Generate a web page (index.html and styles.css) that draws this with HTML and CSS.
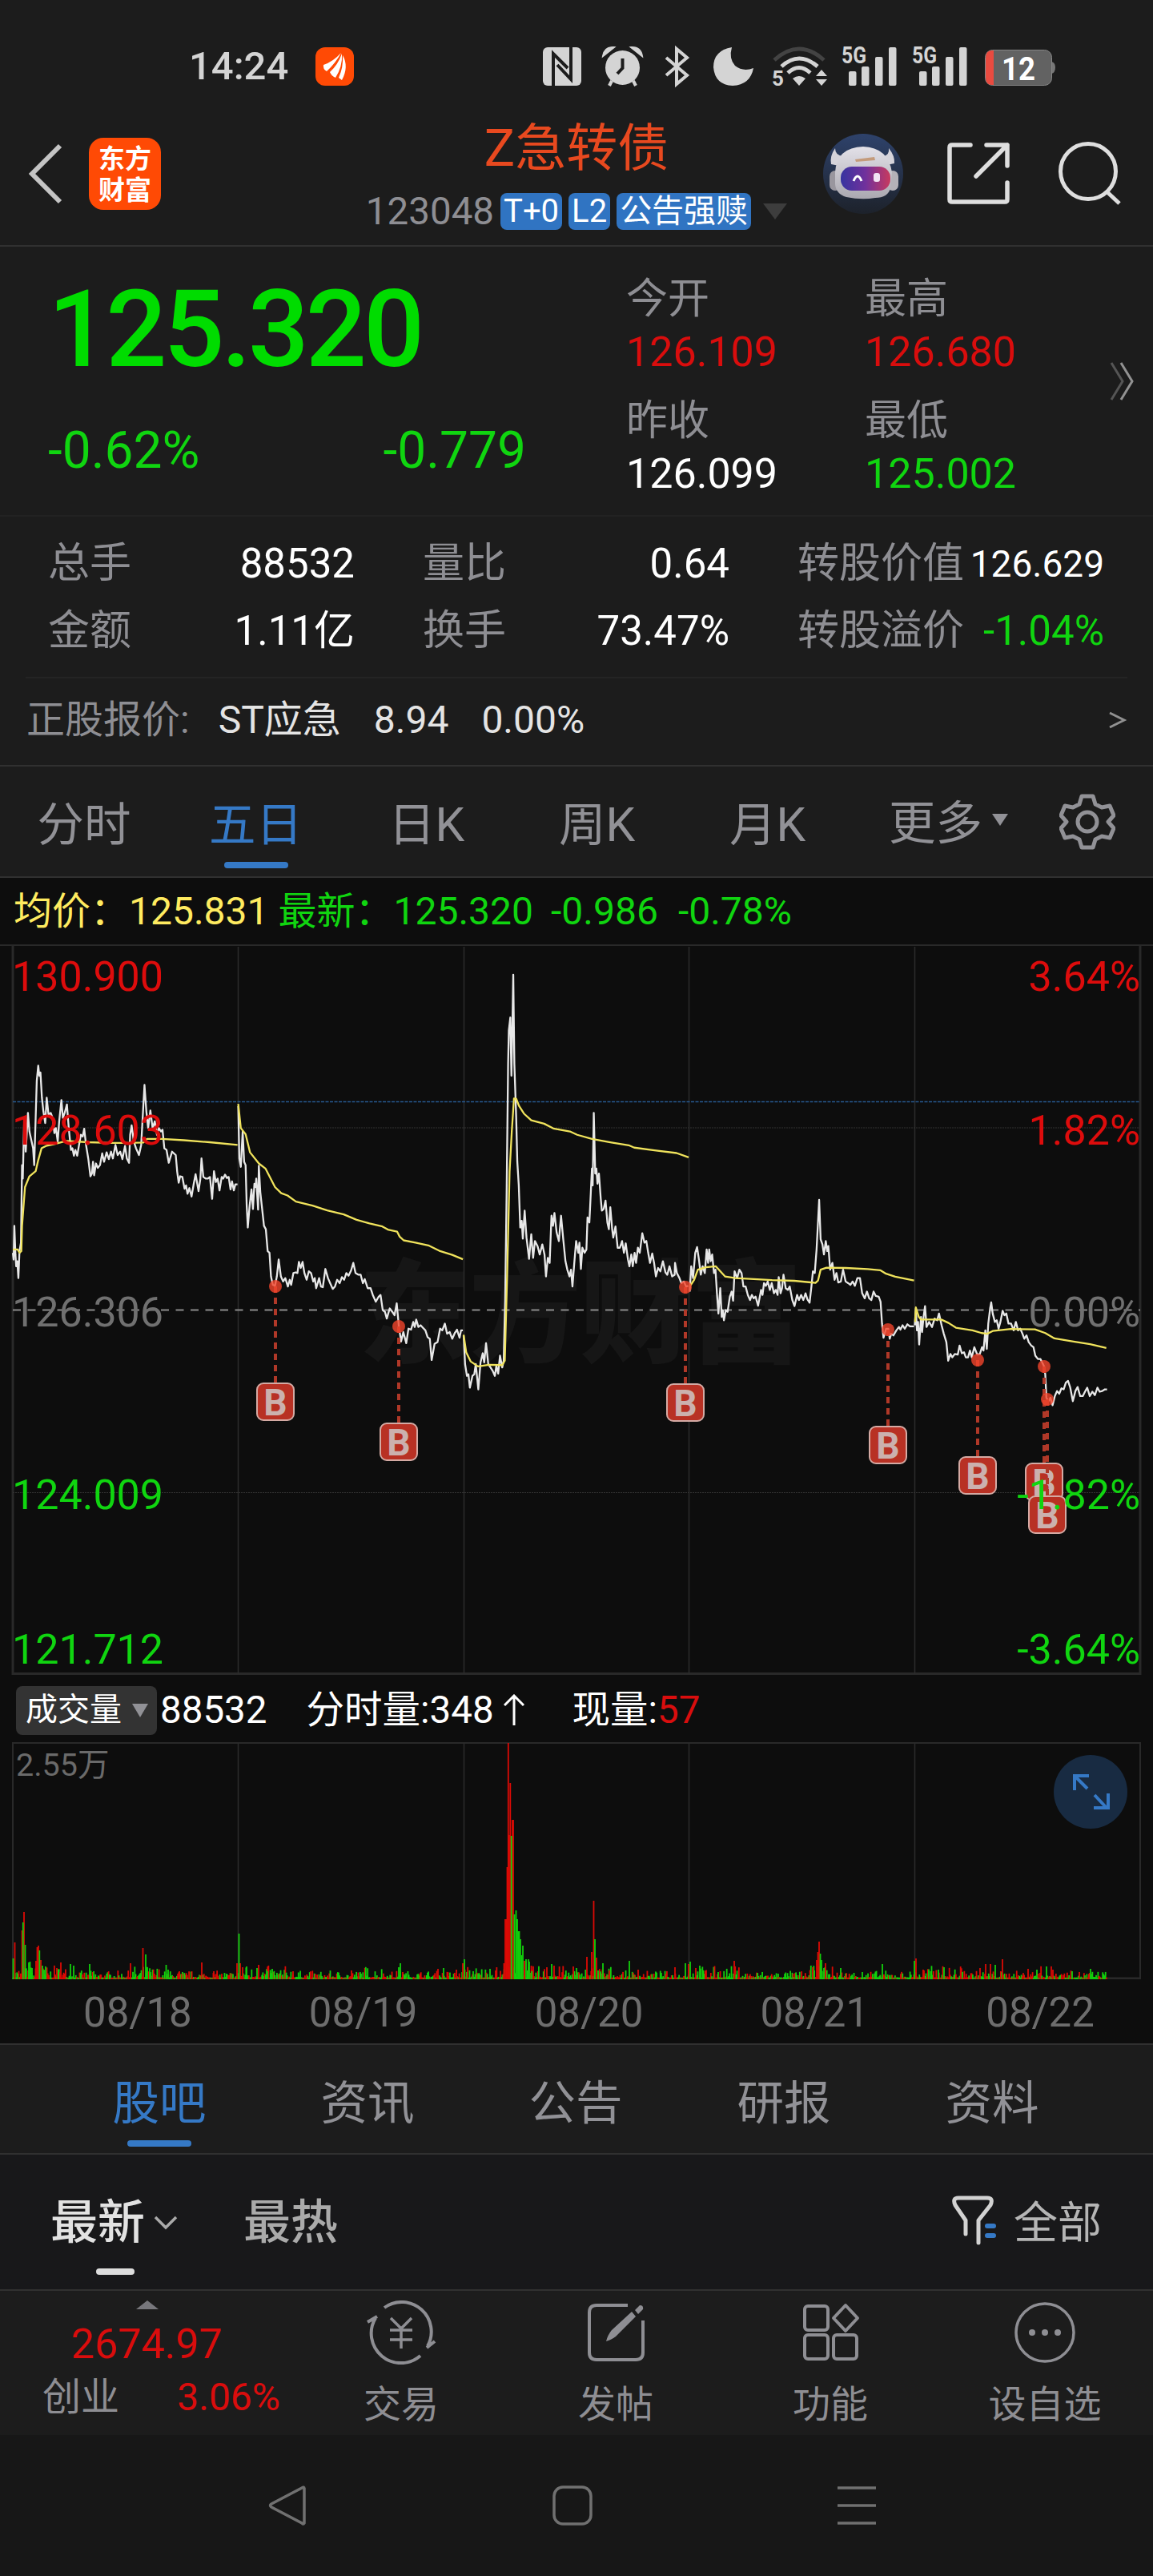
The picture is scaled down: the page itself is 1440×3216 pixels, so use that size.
FILE: index.html
```html
<!DOCTYPE html>
<html lang="zh-CN">
<head>
	<meta charset="utf-8">
	<title>Z急转债 123048</title>
	<link rel="stylesheet" href="styles.css">
</head>
<body>
	<!-- status bar -->
	<div class="status">
		<span class="clock">14:24</span>
		<svg class="appIcon" width="48" height="48" viewBox="0 0 48 48"><rect width="48" height="48" rx="12" fill="#ff4a05"/><path d="M10 22Q22 18 32 7Q25 20 14 30Q9 27 10 22ZM18 31Q28 22 33 8Q34 24 25 38Q20 36 18 31ZM29 38Q35 25 34 10Q42 24 33 41Z" fill="#fff"/></svg>
		<svg class="sysIcons" width="650" height="60" viewBox="672 52 650 60" fill="#d4d4d4">
			<!-- nfc -->
			<rect x="678" y="58" width="48" height="48" rx="6"/>
			<path d="M691 106V66L709 84M713 58V98L696 80" fill="none" stroke="#1c1c1c" stroke-width="4"/>
			<!-- alarm -->
			<ellipse cx="777.500" cy="83.500" rx="21.500" ry="21.500"/>
			<path d="M753 69Q755 57 767 58ZM802 69Q800 57 788 58Z" stroke="#d4d4d4" stroke-width="2"/>
			<path d="M764 100L761 106M791 100L794 106" stroke="#d4d4d4" stroke-width="4"/>
			<path d="M777.500 72V84L771 91" fill="none" stroke="#1c1c1c" stroke-width="4"/>
			<!-- bluetooth -->
			<path d="M832 71L858 93L845 104V60L858 71L832 93" fill="none" stroke="#d4d4d4" stroke-width="4"/>
			<!-- moon -->
			<path d="M914 58Q891 62 891 83Q893 105 915 106Q937 105 941 84Q928 89 918 81Q910 72 914 58Z"/>
			<!-- wifi -->
			<g fill="none" stroke-width="5">
				<path d="M967 74Q998 46 1029 74" stroke="#434343"/>
				<path d="M976 82Q998 62 1021 82M984 90Q998 77 1012 90" stroke="#d4d4d4"/>
			</g>
			<path d="M990 97Q998 91 1006 97L998 106ZM1019 94L1026 86L1033 94ZM1019 98L1026 106L1033 98Z"/>
			<text x="964" y="106" font-size="26" font-weight="700">5</text>
			<!-- signal -->
			<g id="signal">
				<text x="1051" y="78" font-size="29" font-weight="700" textLength="31" lengthAdjust="spacingAndGlyphs">5G</text>
				<rect x="1060" y="88" width="9.500" height="18" rx="2"/>
				<rect x="1076" y="82" width="9.500" height="24" rx="2"/>
				<rect x="1093" y="70" width="9.500" height="36" rx="2"/>
				<rect x="1110" y="58" width="9.500" height="48" rx="2"/>
			</g>
			<use href="#signal" x="88"/>
			<!-- battery -->
			<path d="M1313 76Q1318 77 1318 83Q1318 90 1313 91Z" fill="#777"/>
			<rect x="1230.500" y="61.500" width="83" height="44" rx="9" fill="#626262" stroke="#858585"/>
			<path d="M1241 62H1239Q1231 62 1231 71V96Q1231 105 1239 105H1241Z" fill="#e94b40"/>
			<text x="1272" y="98.500" font-size="41" font-weight="700" fill="#fff" text-anchor="middle" textLength="42" lengthAdjust="spacingAndGlyphs">12</text>
		</svg>
	</div>

	<!-- title -->
	<header class="header">
		<div class="headLeft">
			<svg width="44" height="76" viewBox="0 0 44 76"><path d="M40 3L5 38L40 73" fill="none" stroke="#c4c4c4" stroke-width="6"/></svg>
			<div class="brand">东方<br>财富</div>
		</div>
		<div class="headTitle">
			<h1>Z急转债</h1>
			<div class="sub">
				<span class="code">123048</span><b class="tag">T+0</b><b class="tag">L2</b><b class="tag">公告强赎</b>
				<svg width="30" height="20" viewBox="0 0 30 20"><path d="M0 0H30L15 20Z" fill="#3d3d3d"/></svg>
			</div>
		</div>
		<div class="headRight">
			<svg width="100" height="100" viewBox="0 0 100 100">
				<defs>
					<linearGradient id="sky" x1="0" y1="0" x2="0" y2="1"><stop offset="0" stop-color="#2e426b"/><stop offset="1" stop-color="#1d222b"/></linearGradient>
					<linearGradient id="visor"><stop offset="0" stop-color="#3733a0"/><stop offset=".5" stop-color="#71319c"/><stop offset="1" stop-color="#c83a5e"/></linearGradient>
					<linearGradient id="shell" x1="0" y1="0" x2="0" y2="1"><stop offset="0" stop-color="#e3e1e8"/><stop offset="1" stop-color="#aaa8b0"/></linearGradient>
				</defs>
				<circle cx="50" cy="50" r="50" fill="url(#sky)"/>
				<path d="M15 18Q8 28 10 38L20 40L25 28Q15 27 15 18ZM82 18Q90 28 89 37L79 39L75 28Q83 27 82 18Z" fill="#d5d3da"/>
				<rect x="8" y="46" width="14" height="25" rx="7" fill="#99969e"/><rect x="80" y="46" width="14" height="25" rx="7" fill="#b4b1b8"/>
				<path d="M15 48Q17 17 50 16Q81 17 86 48L84 68Q81 80 65 80Q48 83 29 79Q16 75 15 63Z" fill="url(#shell)"/>
				<path d="M40 32L64 29L65 33L41 35Z" fill="#c49b7b"/>
				<rect x="22" y="41" width="62" height="30" rx="14" fill="url(#visor)"/>
				<path d="M38 59Q43 47 48 59" fill="none" stroke="#fff" stroke-width="3"/><rect x="63" y="49" width="8" height="11" rx="3" fill="#f2e4f3"/>
			</svg>
			<svg width="78" height="78" viewBox="0 0 78 78" fill="none" stroke="#dedede" stroke-width="5.500" stroke-linecap="round" stroke-linejoin="round"><path d="M29 3H6Q3 3 3 6V71Q3 74 6 74H72Q75 74 75 71V50M49 3H75V29M75 3L36 42"/></svg>
			<svg width="80" height="80" viewBox="0 0 80 80" fill="none" stroke="#dedede" stroke-width="5"><circle cx="38" cy="37" r="34.500"/><path d="M61 62L77 77"/></svg>
		</div>
	</header>

	<!-- quote -->
	<section class="quote">
		<div class="last green">
			<div class="price">125.320</div>
			<div class="change"><span>-0.62%</span><span>-0.779</span></div>
		</div>
		<dl class="ohlc">
			<div><dt>今开</dt><dd class="red">126.109</dd></div>
			<div><dt>最高</dt><dd class="red">126.680</dd></div>
			<div><dt>昨收</dt><dd>126.099</dd></div>
			<div><dt>最低</dt><dd class="green">125.002</dd></div>
		</dl>
		<svg class="more" width="34" height="48" viewBox="0 0 34 48" fill="none" stroke-width="3"><path d="M3 1L17 24L3 47" stroke="#555"/><path d="M15 1L29 24L15 47" stroke="#929292"/></svg>
	</section>
	<section class="stats">
		<div><span>总手</span><b>88532</b></div>
		<div><span>量比</span><b>0.64</b></div>
		<div><span>转股价值</span><b class="small">126.629</b></div>
		<div><span>金额</span><b>1.11亿</b></div>
		<div><span>换手</span><b>73.47%</b></div>
		<div><span>转股溢价</span><b class="green">-1.04%</b></div>
	</section>
	<section class="stock">
		<span class="stockLabel">正股报价:</span><span>ST应急</span><span>8.94</span><span>0.00%</span>
		<svg width="24" height="22" viewBox="0 0 24 22"><path d="M2 2L20 11L2 20" fill="none" stroke="#909090" stroke-width="3"/></svg>
	</section>

	<!-- period tabs -->
	<nav class="tabs">
		<a>分时</a><a class="on">五日</a><a>日K</a><a>周K</a><a>月K</a>
		<a class="moreTab">更多<svg width="20" height="15" viewBox="0 0 20 15"><path d="M0 0H20L10 15Z" fill="#919196"/></svg></a>
		<svg class="gear" width="70" height="70" viewBox="0 0 70 70" fill="none" stroke="#919196" stroke-width="5" stroke-linejoin="round"><path d="M28 3H42L45 13L53 17L63 15L68 27L61 35L68 43L63 55L53 53L45 57L42 67H28L25 57L17 53L7 55L2 43L9 35L2 27L7 15L17 17L25 13Z"/><circle cx="35" cy="35" r="12"/></svg>
	</nav>

	<!-- five day chart -->
	<section class="chart">
		<div class="legend"><span class="yellow">均价：125.831</span><span class="green">最新：125.320</span><span class="green">-0.986</span><span class="green percent">-0.78%</span></div>
		<svg class="plot" width="1440" height="912" viewBox="0 1179 1440 912">
			<g font-size="140" font-weight="900" fill="#161616"><text x="448" y="1690" textLength="554">东方财富</text></g>
			<path d="M0 1180H1440" stroke="#333" stroke-width="1.500"/>
			<path d="M16 1180V2091M1424 1180V2091M16 2089.500H1424" stroke="#292929" stroke-width="3" fill="none"/>
			<path d="M297.500 1182V2090M579.500 1182V2090M860.500 1182V2090M1142.500 1182V2090" stroke="#2c2c2c" stroke-width="1.500"/>
			<path d="M16 1408H1424M16 1863.500H1424" stroke="#333" stroke-dasharray="2 1"/>
			<path d="M16 1375.500H1424" stroke="#27588f" stroke-width="1.500" stroke-dasharray="4 1.500"/>
			<path d="M16 1635.500H1424" stroke="#8b8b8b" stroke-width="1.800" stroke-dasharray="10 8.500"/>
			<g class="curves" transform="matrix(.45918 0 0 .42091 0 1160)">
				<g stroke="#e8e8e8">
					<polyline points="35,960 37,980 39,880 42,965 44,1000 47,985 50,1035 53,955 57,930 60,700 62,740 66,560 70,660 76,545 80,600 85,625 90,650 93,700 97,560 100,450 104,405 107,435 110,425 114,500 118,540 123,575 127,500 132,550 138,545 143,560 148,605 152,590 157,630 161,570 167,507 171,560 176,545 182,520 187,590 193,655 197,650 201,672 205,655 210,672 215,640 220,610 225,615 229,592 234,640 240,680 246,733 250,725 253,690 256,730 261,695 266,708 272,700 278,665 283,690 290,662 296,682 302,660 307,680 314,640 320,670 327,660 333,682 340,643 345,680 351,693 354,610 358,582 364,630 370,650 378,670 384,640 388,560 393,462 398,540 403,590 409,538 415,590 421,570 427,610 432,590 438,600 442,595 447,650 453,655 459,693 468,660 478,670 482,720 486,752 490,733 496,735 502,770 506,760 510,785 515,768 521,793 527,755 532,727 540,777 545,740 548,680 553,735 560,740 565,740 571,735 577,800 582,718 587,750 592,740 597,775 603,735 607,740 612,728 617,738 622,735 627,772 631,748 636,775 640,757 646,757"/>
					<polyline points="648,525 651,680 655,705 660,600 664,690 668,700 671,820 674,885 679,820 684,772 688,830 692,755 695,765 697,740 702,832 704,702 708,780 713,830 718,880 723,890 728,955 733,960 737,1030 742,1055 748,1058 753,1030 758,980 764,1030 770,1045 776,1035 783,1060 788,1040 792,1055 798,1020 804,1018 809,1020 813,987 818,1005 823,987 828,1020 834,1040 840,1015 846,1020 852,1045 856,1035 860,1065 868,1035 873,1060 878,1062 885,1008 892,1035 898,1050 905,1067 911,1060 917,1040 924,1050 930,1032 936,1040 942,1020 948,1028 955,1012 961,990 967,1020 975,1025 981,1025 987,1050 992,1038 1000,1065 1008,1065 1014,1085 1022,1105 1030,1090 1035,1085 1041,1130 1047,1135 1052,1155 1060,1125 1067,1135 1073,1145 1079,1110 1085,1180 1091,1223 1097,1195 1105,1228 1111,1185 1118,1188 1124,1165 1128,1180 1132,1158 1138,1180 1144,1175 1150,1182 1157,1190 1163,1210 1169,1215 1174,1278 1182,1230 1190,1225 1197,1185 1203,1190 1210,1170 1216,1200 1223,1195 1230,1215 1237,1198 1243,1188 1250,1212 1254,1190 1259,1190"/>
					<polyline points="1261,1205 1265,1290 1270,1325 1274,1320 1278,1360 1285,1325 1290,1320 1294,1290 1301,1365 1307,1285 1313,1258 1317,1285 1322,1228 1328,1290 1334,1300 1340,1310 1346,1325 1350,1295 1355,1318 1360,1265 1366,1300 1370,1280 1374,1100 1378,780 1382,400 1384,300 1388,262 1391,435 1394,265 1396,135 1399,400 1404,560 1407,690 1411,760 1415,885 1419,865 1422,918 1427,835 1432,915 1439,978 1445,905 1450,975 1455,925 1462,940 1468,965 1475,935 1481,965 1485,1030 1490,975 1495,990 1500,850 1504,880 1508,842 1514,900 1520,925 1526,850 1532,920 1538,985 1543,1010 1549,1030 1553,1010 1557,1060 1562,990 1567,925 1573,960 1576,930 1580,1008 1584,945 1590,960 1595,950 1598,855 1603,870 1607,780 1610,710 1612,760 1615,545 1619,725 1622,710 1625,755 1629,725 1634,800 1637,835 1642,830 1647,805 1652,870 1656,890 1660,825 1665,890 1668,915 1674,882 1680,945 1686,945 1692,925 1697,960 1702,932 1708,980 1712,1000 1717,965 1721,1000 1726,960 1730,990 1735,945 1740,960 1747,902 1753,930 1758,925 1763,960 1768,990 1774,962 1779,990 1784,1030 1790,1005 1796,1015 1803,985 1810,1018 1815,1025 1821,1000 1828,1030 1835,1025 1836,990 1841,1020 1848,1035 1853,1050 1860,1045 1866,1060 1872,1058"/>
					<polyline points="1876,1075 1880,1000 1885,1035 1891,960 1896,943 1901,980 1906,1025 1911,1000 1917,1020 1922,950 1926,990 1929,950 1933,985 1937,965 1942,1020 1946,1010 1950,1080 1954,1140 1959,1065 1963,1150 1966,1130 1969,1160 1974,1130 1979,1135 1985,1090 1990,1075 1994,1102 1998,1015 2005,1035 2011,1010 2017,1020 2022,1060 2028,1060 2034,1085 2040,1100 2045,1085 2050,1095 2055,1090 2062,1117 2070,1070 2074,1085 2078,1050 2083,1058 2088,1045 2094,1070 2099,1050 2105,1080 2110,1070 2115,1085 2118,1032 2123,1080 2127,1065 2131,1025 2137,1065 2143,1070 2148,1060 2155,1100 2161,1118 2168,1085 2173,1100 2179,1085 2185,1100 2191,1080 2196,1098 2202,1108 2207,1060 2211,1015 2216,1020 2221,950 2228,803 2232,920 2237,935 2241,965 2246,925 2250,955 2253,940 2258,1010 2264,990 2270,1040 2275,1020 2280,1048 2287,1045 2293,1010 2300,1045 2307,1050 2313,1055 2319,1045 2325,1058 2332,1035 2339,1035 2345,1080 2352,1095 2358,1075 2364,1095 2370,1100 2376,1075 2382,1088 2390,1090 2395,1105 2399,1170 2403,1212 2410,1185 2416,1185 2420,1215 2424,1200 2430,1205 2438,1190 2445,1180 2449,1188 2455,1175 2461,1185 2468,1172 2475,1178 2486,1178"/>
					<polyline points="2488,1175 2491,1125 2494,1190 2497,1165 2500,1232 2505,1150 2508,1195 2512,1150 2516,1118 2520,1180 2527,1165 2535,1180 2542,1155 2549,1160 2554,1140 2561,1175 2567,1200 2574,1225 2579,1280 2585,1260 2590,1270 2597,1260 2605,1262 2610,1235 2616,1258 2622,1255 2627,1270 2633,1270 2638,1250 2643,1270 2650,1240 2658,1262 2665,1260 2671,1240 2675,1250 2680,1190 2684,1245 2688,1170 2693,1125 2696,1107 2700,1140 2706,1165 2711,1160 2716,1185 2721,1165 2727,1132 2732,1145 2737,1140 2743,1170 2750,1170 2757,1190 2763,1165 2769,1190 2775,1185 2781,1200 2786,1215 2792,1205 2798,1225 2805,1235 2811,1240 2816,1265 2823,1275 2830,1275 2839,1295 2843,1320 2846,1390 2852,1400 2857,1390 2863,1412 2869,1385 2875,1370 2881,1378 2887,1362 2893,1365 2899,1345 2905,1340 2911,1360 2918,1400 2925,1370 2931,1358 2938,1385 2945,1385 2951,1372 2957,1360 2964,1385 2971,1372 2978,1382 2985,1360 2991,1372 2998,1370 3005,1365 3011,1365"/>
				</g>
				<!-- average price -->
				<g stroke="#f0e35c">
					<polyline points="35,950 48,950 53,960 58,955 60,880 68,765 80,733 97,718 104,685 113,650 125,643 150,637 180,628 240,632 300,634 350,634 390,633 400,622 440,622 500,626 570,632 646,640"/>
					<polyline points="648,518 655,590 668,608 680,662 704,695 722,710 748,765 765,783 782,790 805,808 850,820 890,834 935,846 970,862 1005,873 1040,882 1055,891 1080,897 1087,912 1098,923 1130,930 1165,938 1195,954 1230,966 1259,979"/>
					<polyline points="1261,1203 1268,1255 1280,1282 1300,1297 1330,1292 1366,1293 1373,1280 1380,1000 1386,720 1392,600 1398,502 1404,503 1412,525 1425,547 1445,567 1480,577 1505,591 1550,600 1570,610 1610,622 1660,632 1710,641 1725,648 1780,656 1840,664 1873,677"/>
					<polyline points="1876,1060 1888,1040 1898,1010 1920,1003 1947,1000 1957,1012 1972,1030 2000,1035 2100,1041 2160,1043 2218,1049 2225,1042 2232,1010 2248,1004 2300,1005 2360,1008 2395,1012 2410,1022 2435,1031 2486,1042"/>
					<polyline points="2489,1165 2491,1122 2499,1150 2505,1158 2560,1158 2580,1168 2600,1182 2645,1190 2670,1198 2685,1200 2700,1192 2750,1186 2815,1187 2843,1198 2868,1214 2920,1223 2965,1231 3009,1242"/>
				</g>
			</g>
			<g id="marks"></g>
			<g class="axis">
				<text x="15" y="1237" class="fillRed">130.900</text><text x="15" y="1429" class="fillRed">128.603</text>
				<text x="15" y="1656" class="fillGray">126.306</text>
				<text x="15" y="1884" class="fillGreen">124.009</text><text x="15" y="2077" class="fillGreen">121.712</text>
				<g text-anchor="end">
					<text x="1424" y="1237" class="fillRed">3.64%</text><text x="1424" y="1429" class="fillRed">1.82%</text>
					<text x="1424" y="1656" class="fillGray">0.00%</text>
					<text x="1424" y="1884" class="fillGreen">-1.82%</text><text x="1424" y="2077" class="fillGreen">-3.64%</text>
				</g>
			</g>
		</svg>

		<!-- volume -->
		<div class="volInfo">
			<span class="volBtn">成交量<svg width="20" height="17" viewBox="0 0 20 17"><path d="M0 0H20L10 17Z" fill="#919196"/></svg></span>
			<span>88532</span><span class="minute">分时量:348<svg width="26" height="40" viewBox="0 0 26 40"><path d="M13 39V3M1 14L13 2L25 14" fill="none" stroke="#fff" stroke-width="3"/></svg></span><span class="now">现量:<i class="red">57</i></span>
		</div>
		<div class="volume">
			<svg class="plot" width="1440" height="296" viewBox="0 2175 1440 296">
				<path d="M16 2471V2176H1424V2471" fill="none" stroke="#292929" stroke-width="2"/>
				<path d="M16 2470H1424" stroke="#292929" stroke-width="3"/>
				<path d="M297.500 2176V2470M579.500 2176V2470M860.500 2176V2470M1142.500 2176V2470" stroke="#2c2c2c" stroke-width="1.500"/>
				<g id="bars"></g>
				<text x="20" y="2217" font-size="39.500" fill="#6a6a6a">2.55万</text>
			</svg>
			<svg class="expand" width="92" height="92" viewBox="0 0 92 92" fill="none" stroke="#3579c6" stroke-width="4"><circle cx="46" cy="46" r="46" fill="#182b42" stroke="none"/><path d="M26 44V26H44M26 26L42 42M68 48V66H50M66 66L51 50"/></svg>
		</div>
		<div class="dates"><span>08/18</span><span>08/19</span><span>08/20</span><span>08/21</span><span>08/22</span></div>
	</section>

	<!-- forum -->
	<nav class="subTabs"><a class="on">股吧</a><a>资讯</a><a>公告</a><a>研报</a><a>资料</a></nav>
	<div class="filter">
		<span class="newest">最新</span><svg width="30" height="20" viewBox="0 0 30 20"><path d="M2 3L15 16L28 3" fill="none" stroke="#aaa" stroke-width="3.500"/></svg>
		<span class="hottest">最热</span>
		<svg class="funnel" width="58" height="64" viewBox="0 0 58 64" fill="none" stroke="#d2d2d2" stroke-width="5" stroke-linecap="round" stroke-linejoin="round"><path d="M18 48V31L5 12Q1 3 9 3H45Q53 3 49 12L34 31V59"/><path d="M45 38H53M45 50H53" stroke="#3579c6" stroke-width="6"/></svg>
		<span class="all">全部</span>
	</div>

	<!-- bottom bar -->
	<nav class="bottom">
		<div class="index">
			<svg width="28" height="11" viewBox="0 0 28 11"><path d="M0 11L14 0L28 11Z" fill="#77777c"/></svg>
			<div class="indexValue red">2674.97</div>
			<div class="indexRow"><span>创业</span><span class="red">3.06%</span></div>
		</div>
		<a><svg width="90" height="80" viewBox="-45 -40 90 80" fill="none" stroke="#8e8e93" stroke-width="4"><path d="M-21 -31A37 37 0 0 1 33 17M32 19L42 11M24 29A37 37 0 0 1 -32 -18M-30 -20L-42 -13"/><path d="M-13 -18L0 -5L13 -18M0 -5V20M-14 -3H14M-14 9H14" stroke-width="3.500"/></svg>交易</a>
		<a><svg width="90" height="80" viewBox="-45 -40 90 80" fill="none" stroke="#8e8e93" stroke-width="4"><path d="M15 -34H-24Q-33 -34 -33 -25V25Q-33 34 -24 34H25Q34 34 34 25V-15"/><path d="M-12 11Q-10 3 -5 -3L20 -26L25 -20L0 5Q-5 9 -12 11ZM24 -28L30 -34Q35 -34 34 -29L28 -23Z" fill="#8e8e93" stroke="none"/></svg>发帖</a>
		<a><svg width="90" height="80" viewBox="-45 -40 90 80" fill="none" stroke="#8e8e93" stroke-width="4"><rect x="-32" y="-33" width="29" height="30" rx="4"/><rect x="-32" y="3" width="29" height="30" rx="4"/><rect x="4" y="3" width="29" height="30" rx="4"/><path d="M19 -34L34 -18L19 -2L4 -18Z" stroke-linejoin="round"/></svg>功能</a>
		<a><svg width="90" height="80" viewBox="-45 -40 90 80" fill="none" stroke="#8e8e93" stroke-width="3.500"><circle r="36"/><g fill="#8e8e93" stroke="none"><circle cx="-16" r="4"/><circle r="4"/><circle cx="16" r="4"/></g></svg>设自选</a>
	</nav>
	<div class="sysNav">
		<svg width="50" height="50" viewBox="0 0 50 50"><path d="M45 3V47Q44 49 42 47L4 27Q1 25 4 23L42 3Q45 1 45 4Z"/></svg>
		<svg width="50" height="50" viewBox="0 0 50 50"><rect x="2" y="2" width="46" height="46" rx="11"/></svg>
		<svg width="50" height="50" viewBox="0 0 50 50"><path d="M1 3H49M1 25H49M1 47H49"/></svg>
	</div>
	<script src="chart.js"></script>
</body>
</html>
```
FILE: styles.css
```css
*{
	box-sizing:border-box;
}
body{
	margin:0;
	width:1440px;
	background:#1c1c1c;
	color:#fff;
	font-family:Roboto,"Noto Sans CJK SC",sans-serif;
	font-size:52px;
	line-height:1.2;
}
svg{
	display:block;
	flex:none;
}
b,i,h1{
	font-weight:400;
	font-style:normal;
}
.red{
	color:#d90d0d;
}
.green{
	color:#10d510;
}
.yellow{
	color:#ffeb60;
}

/* status bar */
.status{
	height:140px;
	padding:30px 118px 4px 236px;
	display:flex;
	align-items:center;
	color:#d4d4d4;
}
.clock{
	width:158px;
	font-size:49px;
	font-weight:500;
	line-height:60px;
}
.sysIcons{
	margin-left:auto;
}

/* title */
.header{
	height:168px;
	padding-bottom:12px;
	border-bottom:2px solid #303030;
	display:grid;
	grid-template-columns:440px 560px 440px;
	align-items:center;
}
.headLeft{
	display:flex;
	align-items:center;
	padding-left:35px;
	gap:32px;
}
.brand{
	width:90px;
	height:90px;
	border-radius:18px;
	background:#ff4a05;
	font-size:33px;
	font-weight:700;
	line-height:39px;
	padding-top:7px;
	text-align:center;
}
.headTitle{
	align-self:start;
	padding-top:14px;
}
.headTitle h1{
	margin:0 0 23px;
	font-size:64px;
	line-height:64px;
	text-align:center;
	color:#e8491f;
}
.sub{
	display:flex;
	justify-content:center;
	align-items:center;
	gap:8px;
	line-height:46px;
}
.code{
	font-size:47.500px;
	color:#8e8e93;
}
.tag{
	height:46px;
	padding:0 4px;
	border-radius:8px;
	background:#3074c2;
	font-size:40px;
}
.sub svg{
	margin-left:7px;
}
.headRight{
	display:flex;
	align-items:center;
	padding-left:28px;
}
.headRight svg + svg{
	margin-left:55px;
}
.headRight svg + svg + svg{
	margin-left:60px;
}

/* quote */
.quote{
	height:337px;
	padding:29px 0 0 60px;
	display:flex;
	border-bottom:2px solid #222;
}
.last{
	width:597px;
}
.price{
	font-size:134px;
	font-weight:500;
	line-height:150px;
	letter-spacing:-4px;
	color:#00dc00;
}
.change{
	margin-top:36px;
	display:flex;
	justify-content:space-between;
	font-size:64px;
	line-height:80px;
}
.ohlc{
	margin:4px 0 0 125px;
	display:grid;
	grid-template-columns:298px 298px;
	gap:20px 0;
	align-content:start;
	line-height:66px;
}
.ohlc dt{
	color:#8e8e93;
}
.ohlc dd{
	margin:0;
}
.more{
	margin:115px 0 0 7px;
}
.stats{
	height:200px;
	padding:17px 60px 0;
	display:grid;
	grid-template-columns:repeat(3,383px);
	column-gap:85px;
	line-height:84px;
	align-content:start;
}
.stats div{
	display:flex;
	justify-content:space-between;
	white-space:nowrap;
}
.stats span{
	color:#8e8e93;
}
.stats b{
	font-size:51px;
}
.stats .small{
	font-size:46px;
}
.stock{
	height:112px;
	padding:0 32px 2px 33px;
	display:flex;
	align-items:center;
	font-size:48px;
	color:#e4e4e4;
	border-bottom:2px solid #303030;
	background:linear-gradient(#242424,#242424) 32px 0/1376px 2px no-repeat;
}
.stock span{
	margin-right:41px;
}
.stock .stockLabel{
	color:#8e8e93;
	margin-right:36px;
}
.stock svg{
	margin-left:auto;
}

/* tabs */
.tabs{
	height:139px;
	display:flex;
	align-items:center;
	border-bottom:2px solid #303030;
	font-size:58.500px;
	color:#919196;
}
.tabs a{
	position:relative;
	width:213px;
	height:137px;
	padding-top:5px;
	line-height:137px;
	text-align:center;
	flex:none;
}
.tabs a:first-child{
	padding-right:3px;
}
.tabs .moreTab{
	display:flex;
	align-items:center;
	gap:12px;
	width:214px;
	padding-left:45px;
}
.moreTab svg{
	margin-top:-9px;
}
.gear{
	margin-left:44px;
}
.on{
	color:#3579c6;
}
.on::after{
	content:"";
	position:absolute;
	left:50%;
	bottom:10px;
	width:80px;
	height:8px;
	margin-left:-40px;
	border-radius:4px;
	background:#3579c6;
}

/* chart */
.chart{
	background:#0d0d0d;
}
.legend{
	height:83px;
	padding-left:17px;
	display:flex;
	font-size:48px;
	line-height:83px;
	gap:22px;
}
.legend .yellow{
	margin-right:-10px;
}
.legend .percent{
	margin-left:3px;
}
.curves polyline{
	fill:none;
	stroke-width:2.300;
	stroke-linejoin:round;
	vector-effect:non-scaling-stroke;
}
.axis{
	font-size:52px;
}
.fillRed{
	fill:#dd0c0c;
}
.fillGray{
	fill:#707070;
}
.fillGreen{
	fill:#10d510;
}
.volInfo{
	height:84px;
	padding:4px 0 0 20px;
	display:flex;
	align-items:center;
	font-size:47.500px;
}
.volBtn{
	width:176px;
	height:61px;
	margin-right:4px;
	padding-left:12px;
	border-radius:8px;
	background:#333;
	display:flex;
	align-items:center;
	gap:13px;
	font-size:40px;
}
.minute{
	display:flex;
	align-items:center;
	gap:12px;
	margin:0 60px 0 49px;
}
.volume{
	position:relative;
}
.expand{
	position:absolute;
	left:1316px;
	top:16px;
}
.dates{
	height:80px;
	padding:4px 0 0 31px;
	display:flex;
	font-size:51px;
	line-height:76px;
	color:#6d6d6d;
}
.dates span{
	width:281.800px;
	text-align:center;
}

/* forum */
.subTabs{
	height:139px;
	padding:0 69px;
	display:flex;
	border-top:2px solid #303030;
	border-bottom:2px solid #303030;
	font-size:58.500px;
	line-height:139px;
	color:#919196;
}
.subTabs a{
	position:relative;
	width:260px;
	padding-top:4px;
	text-align:center;
}
.subTabs .on::after{
	bottom:8px;
}
.filter{
	height:170px;
	padding:2px 64px 0 63px;
	display:flex;
	align-items:center;
	background:#18181a;
	border-bottom:2px solid #303030;
	font-size:59px;
	line-height:166px;
	font-weight:500;
}
.newest{
	position:relative;
	color:#e2e2e2;
	margin-right:11px;
}
.newest::after{
	content:"";
	position:absolute;
	left:57px;
	bottom:18px;
	width:48px;
	height:8px;
	border-radius:4px;
	background:#ddd;
}
.hottest{
	margin-left:82px;
	color:#aaa;
}
.funnel{
	margin:-4px 0 0 auto;
}
.all{
	margin-left:20px;
	font-size:55px;
	font-weight:400;
	color:#b5b5b5;
}

/* bottom bar */
.bottom{
	height:180px;
	display:flex;
	color:#8e8e93;
}
.bottom a{
	width:268px;
	padding-top:12px;
	display:flex;
	flex-direction:column;
	align-items:center;
	font-size:47px;
	line-height:60px;
	gap:20px;
}
.index{
	width:367px;
	display:flex;
	flex-direction:column;
	align-items:center;
	padding-top:12px;
	font-size:48px;
}
.indexValue{
	margin-top:14px;
	font-size:52px;
	line-height:60px;
}
.indexRow{
	width:297px;
	margin:6px 0 0 36px;
	display:flex;
	justify-content:space-between;
	line-height:60px;
}
.sysNav{
	height:176px;
	padding:0 0 1px 335px;
	display:flex;
	gap:305px;
	align-items:center;
	background:#171717;
}
.sysNav svg{
	fill:none;
	stroke:#707070;
	stroke-width:3.500;
}
```
FILE: chart.js
```js
(function(){
	const NS='http://www.w3.org/2000/svg',
		RED='#dc0a05',
		GREEN='#12cf0c';
	function add(parent,name,attrs,text){
		const el=document.createElementNS(NS,name);
		for(const k in attrs){el.setAttribute(k,attrs[k]);}
		if(text){el.textContent=text;}
		parent.appendChild(el);
	}
	//
	//### buy points: x, y of price ###
	const marks=document.getElementById('marks');
	[[344,1606],[498,1656],[856,1607],[1109,1660],[1221,1698],[1304,1706],[1308,1747]].forEach(([x,y])=>{
		const top=y+120;
		add(marks,'path',{d:`M${x} ${y}V${top}`,stroke:'#b03828','stroke-width':4,'stroke-dasharray':'8 6'});
		add(marks,'circle',{cx:x,cy:y,r:8,fill:'#f2452c','fill-opacity':.8});
		add(marks,'rect',{x:x-23,y:top+1,width:46,height:46,rx:8,fill:'#b83124',stroke:'#d4aaa4','stroke-width':2});
		add(marks,'text',{x:x,y:top+41,'font-size':46,'font-weight':700,'text-anchor':'middle',fill:'#cbb1ae'},'B');
	});
	//
	//### volume: small trades, then the peaks ###
	const bars=document.getElementById('bars'),bottom=2471;
	function bar(x,h,color){
		add(bars,'rect',{x:x-.9,y:bottom-h,width:1.8,height:h,fill:color});
	}
	let seed=7;
	function rnd(){
		seed=(seed*16807)%2147483647;
		return seed/2147483647;
	}
	for(let x=16.5;x<1383;x+=1.168){
		const day=(x-16)%281.6,
			busy=day<70||(day>150&&day<185)||(x>640&&x<720)?1.7:1,
			h=2+Math.pow(rnd(),3)*9*busy;
		bar(x,h,rnd()<.5?RED:GREEN);
	}
	const peaks={
		r:'18.5,46 27.5,61 30,84 45,23 46.5,40 48,42 51,24 71,14 76,21 163,20 178.5,39 224,10 252,21 267,10 296,20 300,20 303,15 323,18 366,10 439,11 503,9 547,13 570,12 578,20 619,11 629.5,20 631,75 632.3,75 633.5,140 634.8,295 636,180 637.3,245 640,199 641,199 655,23 683,15 692,17 716,16 733,28 739,34 741.5,98 745,27 761,11 797,12 843,15 860,19 869,14 917,23 1015,15 1020,24 1021.5,34 1023,47 1031,20 1144,26 1154,11 1224,14 1231,19 1237,19 1252,25 1284,13 1315,12',
		g:'16.5,26 28.8,71 31.5,43 36,21 37.5,22 40,14 49.3,36 53,17 57,16 88,19 92,17 112,19 117,10 182,31 184,15 188,9 207.5,18 210,12 298.5,57 308,16 321,14 334,10 340,13 498,15 500,20 554,14 580,25 591,10 612,13 638.7,179 642.5,81 644.5,86 646,75 647.2,60 648.5,60 650,50 651.5,30 653,42 657,25 660,25 661,22 664,10 689,19 720,14 743,50 747,11 753,20 786,23 856,20 862,22 874,17 897,9 946,8 1017,11 1024.5,32 1026,24 1029,14 1050,14 1077,9 1102,19 1142,23 1172,12 1179,15 1243,18 1295,12 1307,16 1339,10 1362,13'
	};
	for(const k in peaks){
		peaks[k].split(' ').forEach((p)=>{
			const [x,h]=p.split(',').map(Number);
			bar(x,h,k==='r'?RED:GREEN);
		});
	}
}());
```
